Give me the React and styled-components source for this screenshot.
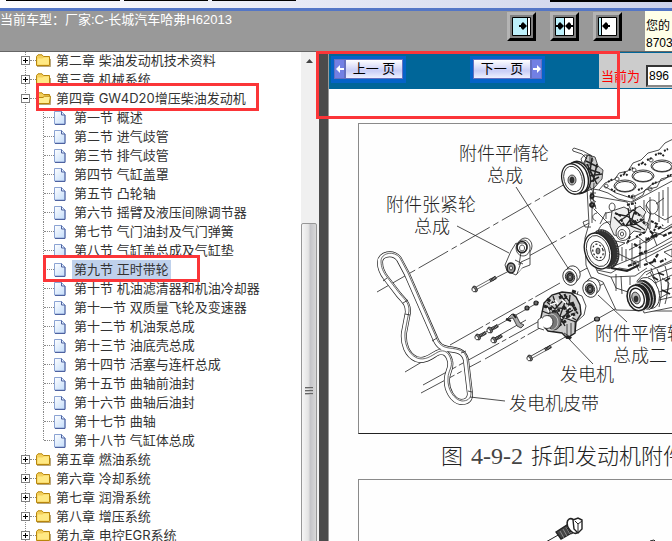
import React from 'react'
import styled, { createGlobalStyle } from 'styled-components';

const GlobalStyle = createGlobalStyle`
    * {
        box-sizing: border-box;
    }

    body {
        margin: 0;
        overflow: hidden;
        font-family: "Liberation Sans", "Noto Sans CJK SC", sans-serif;
        font-size: 13px;
        color: #222;
    }
`;

const Page = styled.div`
    display: flex;
    flex-direction: column;
    height: 100vh;
    overflow: hidden;
    background: #fff;
`;

/* top of the window */
const TabStrip = styled.div`
    display: flex;
    flex: none;
    gap: 4px;
    height: 11px;
    padding-left: 6px;
    background: linear-gradient(to right, #fdfdff, #ccd2ea);
    border-bottom: 3px solid #5476c6;
`;

const TabEdge = styled.span`
    width: ${props => props.$width}px;
    height: ${props => props.$last ? 2 : 1}px;
    margin-left: ${props => props.$last ? 'auto' : 0};
    background: #000;
`;

const Header = styled.header`
    display: flex;
    flex: none;
    height: 41px;
    background: #999;
    border-bottom: 1px solid #666;
`;

const CarModel = styled.div`
    flex: 1;
    color: #fff;
    line-height: 18px;
    white-space: nowrap;
`;

const LayoutButtons = styled.div`
    display: flex;
    gap: 14px;
    padding: 1px 23px 0 0;
`;

const LayoutButton = styled.button`
    display: flex;
    align-items: center;
    justify-content: center;
    width: 29px;
    height: 29px;
    padding: 0;
    background: #808080;
    border: 3px solid;
    border-color: #b4b4b4 #000 #000 #b4b4b4;
`;

const UserInfo = styled.div`
    width: 27px;
    padding: 7px 0 0 1px;
    overflow: hidden;
    background: #ffffe8;
    color: #000;
    font-size: 12px;
    line-height: 17px;
    white-space: nowrap;
`;

const Main = styled.div`
    display: flex;
    flex: 1;
    min-height: 0;
`;

/* chapter tree */
const Sidebar = styled.nav`
    flex: none;
    width: 301px;
    overflow: hidden;
    font-family: Inter, "Noto Sans CJK SC", sans-serif;
`;

const Chapters = styled.ul`
    margin: -1px 0 0 25px;
    padding: 0;
    list-style: none;
    border-left: 1px dotted #888;
`;

const Sections = styled.ul`
    margin: 0 0 0 17px;
    padding: 0;
    list-style: none;

    li {
        background: repeating-linear-gradient(#888 0 1px, transparent 1px 2px) 0 0 / 1px 100% no-repeat;
        padding-left: 1px;
    }

    li:last-child {
        background-size: 1px 10px;
    }
`;

const Row = styled.div`
    position: relative;
    display: flex;
    align-items: center;
    height: 19px;
    white-space: nowrap;

    svg {
        flex: none;
    }
`;

const Toggle = styled.button`
    flex: none;
    display: flex;
    width: 9px;
    height: 9px;
    margin-left: -5px;
    padding: 0;
    background: #fff;
    border: 1px solid #808080;
`;

const Dash = styled.span`
    width: ${props => props.$width}px;
    border-top: 1px dotted #888;
`;

const ItemLink = styled.a`
    margin-left: ${props => props.$gap}px;
    padding: 0 2px;
    background: ${props => props.$active ? '#bfd1ec' : 'transparent'};
    color: #333;
    line-height: 19px;
    text-decoration: none;
`;

const RedMark = styled.span`
    position: absolute;
    left: ${props => props.$left}px;
    top: ${props => props.$top}px;
    z-index: 2;
    width: ${props => props.$width}px;
    height: ${props => props.$height}px;
    border: 3px solid #fb3538;
    pointer-events: none;
`;

const ScrollTrack = styled.div`
    display: flex;
    flex: none;
    flex-direction: column;
    width: 18px;
    padding-right: 2px;
    background: #f0f0f0;
`;

const ScrollArrow = styled.button`
    display: flex;
    flex: none;
    align-items: center;
    justify-content: center;
    height: 17px;
    padding: 0;
    background: none;
    border: 0;
`;

const ScrollThumb = styled.div`
    display: flex;
    flex: none;
    flex-direction: column;
    align-items: center;
    justify-content: center;
    gap: 1px;
    height: 336px;
    margin-top: 154px;
    background: linear-gradient(to right, #f6f6f6, #e4e4e4 45%, #c4c4c8 60%, #d8d8d8);
    border: 1px solid #979797;
    border-radius: 2px;
`;

const Grip = styled.span`
    width: 8px;
    height: 2px;
    background: #666;
    border-bottom: 1px solid #bbb;
`;

const Divider = styled.div`
    flex: none;
    width: 10px;
    background: #4b4b4b;
    border-right: 1px solid #999;
`;

/* manual page */
const Content = styled.main`
    position: relative;
    flex: 1;
    min-width: 0;
`;

const Viewport = styled.div`
    height: 100%;
    overflow: hidden;
    background: #fefefe;
`;

const PageBar = styled.div`
    display: flex;
    height: 37px;
    padding: 1px 0 0 2px;
    background: #069;
`;

const PageNav = styled.div`
    display: flex;
    flex: 1;
    gap: 64px;
    min-width: 0;
`;

const NavButton = styled.button`
    display: flex;
    flex: none;
    flex-direction: ${props => props.$next ? 'row-reverse' : 'row'};
    width: 75px;
    height: 27px;
    margin-top: 3px;
    padding: 0;
    background: #0563c8;
    border: 3px solid #0563c8;
    color: #000;
    font: 400 13px/18px "Liberation Sans", "Noto Sans CJK SC", sans-serif;
`;

const NavArrow = styled.span`
    display: flex;
    align-items: center;
    justify-content: center;
    width: 11px;
    height: 20px;
    background: #7280e4;
    border: 1px solid #6570c0;
`;

const NavLabel = styled.span`
    flex: 1;
    height: 20px;
    background: linear-gradient(#fff, #c8cdf6 60%, #eef0ff);
    border: 1px solid #6570c0;
    white-space: nowrap;
`;

const Current = styled.div`
    display: flex;
    flex: none;
    align-items: center;
    width: 73px;
    height: 35px;
    padding-left: 2px;
    overflow: hidden;
    background: #ccc;
    color: #f00;

    label {
        flex: none;
        width: 45px;
        padding-top: 10px;
    }

    input {
        flex: none;
        width: 40px;
        height: 22px;
        margin-top: 10px;
        padding: 0 1px;
        border: 2px inset #888;
        background: #fff;
        color: #000;
        font: 12px "Liberation Sans", sans-serif;
    }
`;

const Document = styled.article`
    padding: 34px 0 0 29px;
`;

const Figure = styled.figure`
    margin: 0;
`;

const Frame = styled.div`
    height: 311px;
    overflow: hidden;
    border: 1px solid #8a8a8a;
    border-right: 0;
    border-bottom-color: #222;

    svg {
        display: block;
        font-family: "Liberation Serif", "Noto Sans CJK SC", serif;
        font-size: 18px;
        font-weight: 300;
    }
`;

const Caption = styled.figcaption`
    display: flex;
    align-items: center;
    gap: 8px;
    height: 45px;
    padding-left: 83px;
    font: 300 22px/45px "Liberation Serif", "Noto Sans CJK SC", serif;
    white-space: nowrap;
`;

const FigureNumber = styled.span`
    color: #444;
    font-size: 24px;
    font-weight: 400;
`;

const sections = [
  '第一节 概述',
  '第二节 进气歧管',
  '第三节 排气歧管',
  '第四节 气缸盖罩',
  '第五节 凸轮轴',
  '第六节 摇臂及液压间隙调节器',
  '第七节 气门油封及气门弹簧',
  '第八节 气缸盖总成及气缸垫',
  '第九节 正时带轮',
  '第十节 机油滤清器和机油冷却器',
  '第十一节 双质量飞轮及变速器',
  '第十二节 机油泵总成',
  '第十三节 油底壳总成',
  '第十四节 活塞与连杆总成',
  '第十五节 曲轴前油封',
  '第十六节 曲轴后油封',
  '第十七节 曲轴',
  '第十八节 气缸体总成',
];

const chapters = [
  { title: '第二章 柴油发动机技术资料' },
  { title: '第三章 机械系统' },
  { title: '第四章 GW4D20增压柴油发动机', sections },
  { title: '第五章 燃油系统' },
  { title: '第六章 冷却系统' },
  { title: '第七章 润滑系统' },
  { title: '第八章 增压系统' },
  { title: '第九章 电控EGR系统' },
];

function FolderIcon({ open }) {
  return (
    <svg width="15" height="13" viewBox="0 0 15 13">
      <path d="M.5 11.5V2.5L2 .8h4l1.5 1.7h6v9z" fill="#f3cf5a" stroke="#b8860b" />
      <path d="M1 12.5h13.5V5" fill="none" stroke="#8a6d28" opacity=".6" />
      {open
        ? <path d="M.8 11.5 2 5.5h5l1.5-1.3h6l-1.2 7.3z" fill="#ffed91" stroke="#b8860b" />
        : <path d="M1.5 4.5h5L8 3.5h5v7H1.5z" fill="#ffe983" />}
    </svg>
  )
}

function PageIcon() {
  return (
    <svg width="12" height="14" viewBox="0 0 12 14">
      <defs>
        <linearGradient id="sheet" x1="0" y1="0" x2="1" y2="1">
          <stop offset="0" stopColor="#fff" />
          <stop offset="1" stopColor="#c3dcfa" />
        </linearGradient>
      </defs>
      <path d="M.5.5h7l3.5 3.5v9H.5z" fill="url(#sheet)" stroke="#8ba3d3" />
      <path d="M7.5.5v3.5H11v9.5H1" fill="none" stroke="#4e62a0" />
    </svg>
  )
}

function PaneIcon({ kind }) {
  const right = 'M2 8h2V7l2-2 4 4-4 4-2-2v-1H2z';
  return (
    <svg width="19" height="19" viewBox="0 0 19 19">
      <path d="M.5.5h18v18H.5z" fill="#fff" stroke="#000" />
      {kind === 'left' && <g>
        <path d="M1 1h14v17H1z" fill="#bdf0fb" />
        <path d="M15.5 1v17" stroke="#000" />
        <path d={right} transform="translate(5 0)" />
      </g>}
      {kind === 'both' && <g>
        <path d="M1 1h8v17H1z" fill="#bdf0fb" />
        <path d="M9.5 1v17" stroke="#000" />
        <path d={right} transform="translate(-1 0)" />
        <path d={right} transform="translate(20 0) scale(-1 1)" />
      </g>}
      {kind === 'right' && <g>
        <path d="M1 1h2v17H1z" fill="#bdf0fb" />
        <path d="M3.5 1v17" stroke="#000" />
        <path d={right} transform="translate(14 0) scale(-1 1)" />
      </g>}
    </svg>
  )
}

function Arrow({ next }) {
  return (
    <svg width="8" height="8" viewBox="0 0 8 8">
      <path d={next ? 'M0 3h4V0l4 4-4 4V5H0z' : 'M8 3H4V0L0 4l4 4V5h4z'} fill="#fff" />
    </svg>
  )
}

function Bolt({ x, y, length }) {
  return (
    <g transform={`translate(${x} ${y}) rotate(-29)`}>
      <path d={`M0-1.2H${length}V1.2H0z`} fill="#fff" strokeWidth=".6" />
      <path d={`M${length - 7} 0h7`} strokeWidth="3.4" strokeDasharray="1 .4" />
      <ellipse rx="2" ry="3.2" fill="#777" />
      <ellipse cx="-1.5" rx="1.6" ry="2.2" fill="#fff" />
    </g>
  )
}

function Idler({ x, y }) {
  return (
    <g transform={`translate(${x} ${y})`}>
      <ellipse cx="4" cy="-2" rx="7" ry="8" fill="#fff" transform="rotate(-20)" />
      <ellipse rx="7" ry="8.5" fill="#fff" transform="rotate(-20)" />
      <ellipse rx="4.5" ry="5.5" fill="#999" transform="rotate(-20)" />
      <ellipse rx="3" ry="3.8" strokeWidth="1.4" fill="#555" />
      <ellipse rx="1.2" ry="1.5" fill="#fff" />
    </g>
  )
}

const belt = 'M380 262C380 254 393 251 399 259L407 274L435 338C438 346 442 348 448 349C457 350 464 351 466 360L470 394C470 400 466 402 461 402C453 401 446 390 447 379C447 372 452 368 450 361C448 353 443 350 437 353C430 357 424 362 416 359C407 355 403 344 404 333L408 312C408 304 405 302 399 295L386 278C382 273 380 268 380 262Z';

function EngineDrawing() {
  return (
    <svg width="480" height="309" viewBox="359 124 480 309" role="img" aria-label="拆卸发动机附件">
      <g fill="none" stroke="#222" strokeWidth=".8">
        {/* axes */}
        <path d="M377 292 572 180M527 257l64-35" strokeDasharray="34 4 6 4" />
        <path d="M405 372l42-25M450 345 560 283M578 273l26-14M423 385 545 318M421 393l60-32M485 359l60-34" strokeDasharray="38 3 5 3" />
        <path d="M474 289 511 270M528 358l110-62M597 287l36-18M477 337l62-35M493 339l33-19" />

        {/* belt */}
        <path d={belt} stroke="#222" strokeWidth="6" />
        <path d={belt} stroke="#fff" strokeWidth="4.6" />
        <path d={belt} stroke="#444" strokeWidth=".8" transform="translate(1 -1)" />
        <path d="M383 281l4-3M403 303l5-3M405 314l5 1M432 341l5-3M461 353l5-2M468 391l4 1" />

        {/* cylinder block */}
        <path d="M587 188l12 2 6-7 10-4 4-6 9-2 5-8 8-3 7-7 11-3 6-7 45-22v190h-50l-44-1-13-28-12-5-5-12-1-27 4-14z" fill="#fff" />
        <path d="M599 190l9 3 10 6 13 3 12-7 2-5 12-3 4-8 11-3M604 186l12 7 15 5 12-6 8-7 14-6 10-7" />
        <path d="M593 196l34 6 4 8-2 22M631 203l41-22M635 205v25M644 200v34M650 197v32M659 192v30M663 190v26M668 187v36" />
        <g fill="#fff" strokeWidth=".9">
          <ellipse cx="625" cy="186" rx="11" ry="6" />
          <ellipse cx="643" cy="176" rx="11" ry="6" />
          <ellipse cx="662" cy="166" rx="11" ry="6" />
          <ellipse cx="625" cy="186.5" rx="9.5" ry="5" />
          <ellipse cx="643" cy="176.5" rx="9.5" ry="5" />
          <ellipse cx="662" cy="166.5" rx="9.5" ry="5" />
        </g>
        <path d="M608 182l5-3M620 176l5-2M629 170l4-2M638 165l5-2M647 160l5-2M655 155l5-2M664 151l4-2M611 189l5 3M628 196l6 1M638 190l5-2M652 184l5-2M667 176l4-1M624 172l4 4M642 162l4 3M660 153l4 3" strokeWidth="2" strokeDasharray="2 1" />
        <path d="M606 184a2 2 0 1 0 .1 0M617 177a2 2 0 1 0 .1 0M634 168a2 2 0 1 0 .1 0M651 158a2 2 0 1 0 .1 0M633 195a2 2 0 1 0 .1 0M650 187a2 2 0 1 0 .1 0" />
        <path d="M612 203a3 4 0 1 0 .2 0M652 200a6 7 0 1 0 .2 0M656 204l8-6M600 224l6-12M606 219v-6l10-2M592 201v22M594 209l18 18M598 232c2-9 10-12 17-9l8 8M588 220l-5 2 2 5h6M597 213c-5 1-6 6-1 8" />
        {/* water pump and brackets */}
        <path d="M612 211l12-4 7 4 9-5 6 6-5 8 8 4-4 9-11-2-7 7-13-3-4-9z" fill="#eee" />
        <path d="M616 214l10 2 7-6 6 4M618 222l9-6 10 7 7-4M614 217l9 9 14-2M628 208l3 18 10 4M636 207l-4 12M622 231l8-11 15 10" strokeWidth="1.3" />
        <path d="M615 213l6 3M634 213l8 3M640 219l6 6M621 219l4 8M630 224l8-4M645 232l-9 5M630 236l-3 8M651 221l6 3-3 7M627 205l9-2" strokeWidth="2" strokeDasharray="3 1" />
        <path d="M646 205l5 8-4 12 6 11M655 214l10 6 7-4M656 226l8 3 8-5M648 242l6-10 11 4M653 236l4 10" />
        <ellipse cx="623" cy="233" rx="7" ry="7.5" fill="#fff" />
        <ellipse cx="622" cy="234" rx="4" ry="4.5" />
        <ellipse cx="622" cy="234" rx="1.6" ry="2" />
        <path d="M626 243l12-6 8 6 26-17M629 250l43-23M633 259l39-22M636 263l36-19M640 240v28M646 237v24M632 243v23M622 247v14M626 249v12M617 253l18 9 4 9M646 261l10 7 16-8M609 268l29-12 15-5 19-10" />
        <path d="M634 244l7 4M646 240l11-6M639 254l8-3M658 254l-5 8M628 266l8-3M644 265l12-4M660 262l6-3M650 231l7 6M658 229l5-4M663 236l9-4" strokeWidth="2.2" strokeDasharray="4 1.5" />
        <path d="M616 241l9 2-7 4zM636 261a3 3 0 1 0 .1 0M664 252l8-3v8z" />
        {/* oil pan */}
        <path d="M594 264l4 9 13 4 5 11 12 4M611 277l24-1 12-8M616 274v17M621 276l1 18M630 277v8M597 270l14 3 8-5 12 2" />
        <path d="M611 268l16 3 12-6" strokeWidth="2" />

        {/* crankshaft pulley */}
        <ellipse cx="605" cy="249" rx="13" ry="20" fill="#333" transform="rotate(-20 605 249)" />
        <ellipse cx="604" cy="249" rx="13" ry="19" stroke="#bbb" strokeWidth=".7" strokeDasharray="1 1.5" transform="rotate(-20 604 249)" />
        <ellipse cx="598" cy="251" rx="13" ry="18.5" fill="#fff" strokeWidth="1.4" transform="rotate(-20 598 251)" />
        <ellipse cx="598" cy="251" rx="11" ry="16" transform="rotate(-20 598 251)" />
        <ellipse cx="598" cy="251" rx="7" ry="10" transform="rotate(-20 598 251)" />
        <ellipse cx="598" cy="251" rx="5" ry="7" strokeWidth="1.2" strokeDasharray="2 2" transform="rotate(-20 598 251)" />
        <ellipse cx="598" cy="251" rx="2" ry="3" fill="#888" />

        {/* steering pump */}
        <path d="M583 164l5-9 7 2 3 9 5 4-1 9-8 9-9 4z" fill="#ccc" />
        <path d="M586 161l12 6M585 168l15 5M589 176l13-2M590 182l9-5M592 158l-2 13 7 13M597 164l-4 18M587 164l8 16" strokeWidth="1.5" />
        <path d="M573 151l9 3 5 5M574 148l9 3 7 4v7M573 151a2 2 0 0 1 1-3M581 159l3-4h7l2 5-3 5h-7zM584 166l3-11" />
        <path d="M589 185l4 7-3 6 3 11M594 183l-1 15 3 11M590 193h6M590 198l6 4M590 206h6" />
        <path d="M592 194a1.5 2 0 1 0 .1 0M592 203a2 2 0 1 0 .1 0" strokeWidth="2" />
        <ellipse cx="579" cy="177" rx="11" ry="16" fill="#fff" strokeWidth="1.5" transform="rotate(-16 579 177)" />
        <ellipse cx="577" cy="178" rx="11" ry="16" strokeWidth="1.5" transform="rotate(-16 577 178)" />
        <ellipse cx="573" cy="179" rx="11" ry="15.5" fill="#fff" strokeWidth="1.3" transform="rotate(-16 573 179)" />
        <ellipse cx="573" cy="179" rx="9" ry="13" transform="rotate(-16 573 179)" />
        <ellipse cx="572" cy="180" rx="4" ry="5" fill="#bbb" />
        <ellipse cx="572" cy="180" rx="2" ry="3" fill="#333" />

        {/* tensioner */}
        <ellipse cx="525" cy="246" rx="7" ry="8" fill="#fff" />
        <path d="M511 251l5-8 14 8v14l-8 3-6 7-9-4-2-6z" fill="#fff" />
        <path d="M523 240a7 8 0 1 0 .1 0M522 243a5 5 0 1 0 .1 0M522 245a2.5 3 0 1 0 .1 0M530 258l-9 4-4 12M515 260l8 4M521 252l-2 13" fill="#fff" />
        <ellipse cx="522" cy="247" rx="5" ry="5.5" strokeWidth="1.5" />
        <ellipse cx="511" cy="268" rx="4" ry="5" fill="#999" strokeWidth="1.6" />
        <ellipse cx="511" cy="268" rx="1.5" ry="2" fill="#fff" />

        <Bolt x={475} y={289} length={24} />
        <Bolt x={530} y={358} length={24} />
        <Bolt x={478} y={337} length={9} />
        <Bolt x={490} y={330} length={9} />
        <Bolt x={494} y={340} length={9} />
        <path d="M507 319l5-5 4 1 4 8 4 2-3 3-4-2-4-8z" fill="#aaa" />
        <path d="M506 319l5 2M513 314l3 4" strokeWidth="2" />
        <ellipse cx="527" cy="308" rx="2" ry="2" fill="#666" strokeWidth="1.2" />
        <ellipse cx="536" cy="303" rx="2" ry="2" fill="#666" strokeWidth="1.2" />
        <ellipse cx="597" cy="319" rx="2.5" ry="2" fill="#888" strokeWidth="1.2" />
        <Idler x={570} y={277} />
        <Idler x={590} y={289} />

        {/* alternator */}
        <path d="M562 297l12-4 8 3 4 10-2 9-10 9z" fill="#fff" />
        <path d="M544 303l8-8 10-3 9 1 5 4 4 8 1 9-5 8-1 11-8 5-5-5-14-2-8-9z" fill="#ccc" strokeWidth="1.4" />
        <path d="M547 302l8 7 12-13M553 296l4 12 14 1M542 311l10 4 3 10M559 293l8 11 8 2M565 302l-6 17 14-9M549 320l12 2 7-11M551 328l8-12 17 6M566 297l12 17M570 295l-2 20 8 5M556 310l9 16M548 307l7 20" strokeWidth="1.3" />
        <path d="M547 299l7 5M559 298l7-3M563 306l6 7M552 312l8-2M548 315l7 8M558 326l9-6M572 302l5 11M566 317l9-3M544 306l8 3M572 291l6 2" strokeWidth="3" stroke="#222" strokeDasharray="4 1.5" />
        <path d="M550 305l6-2M562 300l4 3M557 317l5 1M567 309l3-3M549 312l-2-4M570 318l3-2M555 300l3 4" stroke="#fff" strokeWidth="1.6" />
        <ellipse cx="554" cy="321" rx="7" ry="9" fill="#777" />
        <ellipse cx="551" cy="322" rx="7" ry="8" stroke="#ddd" />
        <ellipse cx="547" cy="322" rx="6" ry="6.5" fill="#fff" />
        <path d="M542 317l-4 3v8l6 2" fill="#fff" />
        <path d="M567 324v12M571 323v13M575 322v10M564 333l8 5" />
        <path d="M566 337l5 1" strokeWidth="3" />

        {/* compressor */}
        <path d="M637 281l8-9 17-6 22-9v48l-25 5-15 3z" fill="#fff" />
        <path d="M650 272l6 11-1 20M657 269c5 10 6 22 2 38M665 266c4 12 4 24 0 38M648 277l24-9M655 283l17-8M656 293l16-5M659 300l13-3M662 278l7 5-2 11-7 4M646 275l6-4M651 268l3 9" />
        <path d="M658 273l6 2M665 281l5-3M662 290l8 4M653 277l5 3" strokeWidth="1.8" />
        <ellipse cx="648" cy="293" rx="11" ry="16" fill="#fff" transform="rotate(-18 648 293)" />
        <ellipse cx="645" cy="295" rx="10" ry="15" fill="#222" transform="rotate(-18 645 295)" />
        <ellipse cx="643" cy="296" rx="10" ry="14.5" stroke="#ddd" transform="rotate(-18 643 296)" />
        <ellipse cx="640" cy="297" rx="10" ry="14" fill="#222" stroke="#ddd" transform="rotate(-18 640 297)" />
        <ellipse cx="637" cy="298" rx="9.5" ry="13" fill="#fff" strokeWidth="1.6" transform="rotate(-18 637 298)" />
        <ellipse cx="637" cy="298" rx="7" ry="10" strokeWidth="1.4" transform="rotate(-18 637 298)" />
        <ellipse cx="636" cy="298" rx="4" ry="6" fill="#bbb" transform="rotate(-18 636 298)" />
        <ellipse cx="636" cy="299" rx="2" ry="3" fill="#333" />

        {/* leaders */}
        <path d="M516 187l52 81M457 226l52 27M598 295l29 27M568 338l25 26M470 397l35 4" />
      </g>
      <g fill="#222">
        <text x="459" y="160">附件平惰轮</text>
        <text x="487" y="182">总成</text>
        <text x="386" y="211">附件张紧轮</text>
        <text x="414" y="233">总成</text>
        <text x="595" y="340">附件平惰轮</text>
        <text x="613" y="362">总成二</text>
        <text x="560" y="381">发电机</text>
        <text x="509" y="410">发电机皮带</text>
      </g>
    </svg>
  )
}

function BoltDrawing() {
  return (
    <svg width="480" height="309" viewBox="359 480 480 309">
      <g fill="none" stroke="#222" strokeWidth="1">
        <path d="M530 551l30-17" />
        <path d="M556 532l14-9 5 8-14 8z" fill="#444" strokeWidth="1.4" />
        <path d="M560 531l4 7M563 529l4 7M566 527l4 7" stroke="#bbb" strokeWidth=".6" />
        <path d="M566 526l4-3 6 8-5 3z" fill="#fff" />
        <ellipse cx="573" cy="526" rx="5" ry="8" fill="#fff" strokeWidth="1.6" transform="rotate(-30 573 526)" />
        <path d="M573 520l5-2 4 2v9l-4 4-4-4z" fill="#fff" strokeWidth="1.4" />
        <path d="M575 521l3 3v8M578 524l4-3" />
        <path d="M650 541l4-1 2 2" />
      </g>
    </svg>
  )
}

export default function App() {
  return (
    <Page>
      <GlobalStyle />
      <TabStrip>
        <TabEdge $width={114} />
        <TabEdge $width={84} />
        <TabEdge $width={84} />
        <TabEdge $width={122} $last />
      </TabStrip>
      <Header>
        <CarModel>当前车型：厂家:C-长城汽车哈弗H62013</CarModel>
        <LayoutButtons>
          <LayoutButton aria-label="目录"><PaneIcon kind="left" /></LayoutButton>
          <LayoutButton aria-label="分栏"><PaneIcon kind="both" /></LayoutButton>
          <LayoutButton aria-label="内容"><PaneIcon kind="right" /></LayoutButton>
        </LayoutButtons>
        <UserInfo>您的<br />8703</UserInfo>
      </Header>
      <Main>
        <Sidebar>
          <Chapters>
            {chapters.map(chapter => (
              <li key={chapter.title}>
                <Row>
                  <Toggle aria-label={chapter.title} aria-expanded={!!chapter.sections}>
                    <svg width="7" height="7" viewBox="0 0 7 7">
                      <path d={chapter.sections ? 'M1 3.5h5' : 'M1 3.5h5M3.5 1v5'} stroke="#000" />
                    </svg>
                  </Toggle>
                  <Dash $width={6} />
                  <FolderIcon open={!!chapter.sections} />
                  <ItemLink href="#" $gap={3}>{chapter.title}</ItemLink>
                  {chapter.sections && <RedMark $left={10} $top={-6} $width={223} $height={28} />}
                </Row>
                {chapter.sections && (
                  <Sections>
                    {chapter.sections.map(title => (
                      <li key={title}>
                        <Row>
                          <Dash $width={10} />
                          <PageIcon />
                          <ItemLink href="#" $gap={6} $active={title === '第九节 正时带轮'}>{title}</ItemLink>
                          {title === '第九节 正时带轮' && <RedMark $left={-1} $top={-5} $width={157} $height={27} />}
                        </Row>
                      </li>
                    ))}
                  </Sections>
                )}
              </li>
            ))}
          </Chapters>
        </Sidebar>
        <ScrollTrack>
          <ScrollArrow aria-label="向上">
            <svg width="7" height="4" viewBox="0 0 7 4"><path d="M0 4l3.5-4L7 4z" fill="#444" /></svg>
          </ScrollArrow>
          <ScrollThumb>
            <Grip />
            <Grip />
            <Grip />
          </ScrollThumb>
        </ScrollTrack>
        <Divider />
        <Content>
          <Viewport>
            <PageBar>
              <PageNav>
                <NavButton>
                  <NavArrow><Arrow /></NavArrow>
                  <NavLabel>上一 页</NavLabel>
                </NavButton>
                <NavButton $next>
                  <NavArrow><Arrow next /></NavArrow>
                  <NavLabel>下一 页</NavLabel>
                </NavButton>
              </PageNav>
              <Current>
                <label htmlFor="page">当前为</label>
                <input id="page" type="text" defaultValue="896" />
              </Current>
            </PageBar>
            <Document>
              <Figure>
                <Frame><EngineDrawing /></Frame>
                <Caption>
                  <span>图</span>
                  <FigureNumber>4-9-2</FigureNumber>
                  <span>拆卸发动机附件</span>
                </Caption>
              </Figure>
              <Frame><BoltDrawing /></Frame>
            </Document>
          </Viewport>
          <RedMark $left={-13} $top={-1} $width={304} $height={68} />
        </Content>
      </Main>
    </Page>
  )
}
